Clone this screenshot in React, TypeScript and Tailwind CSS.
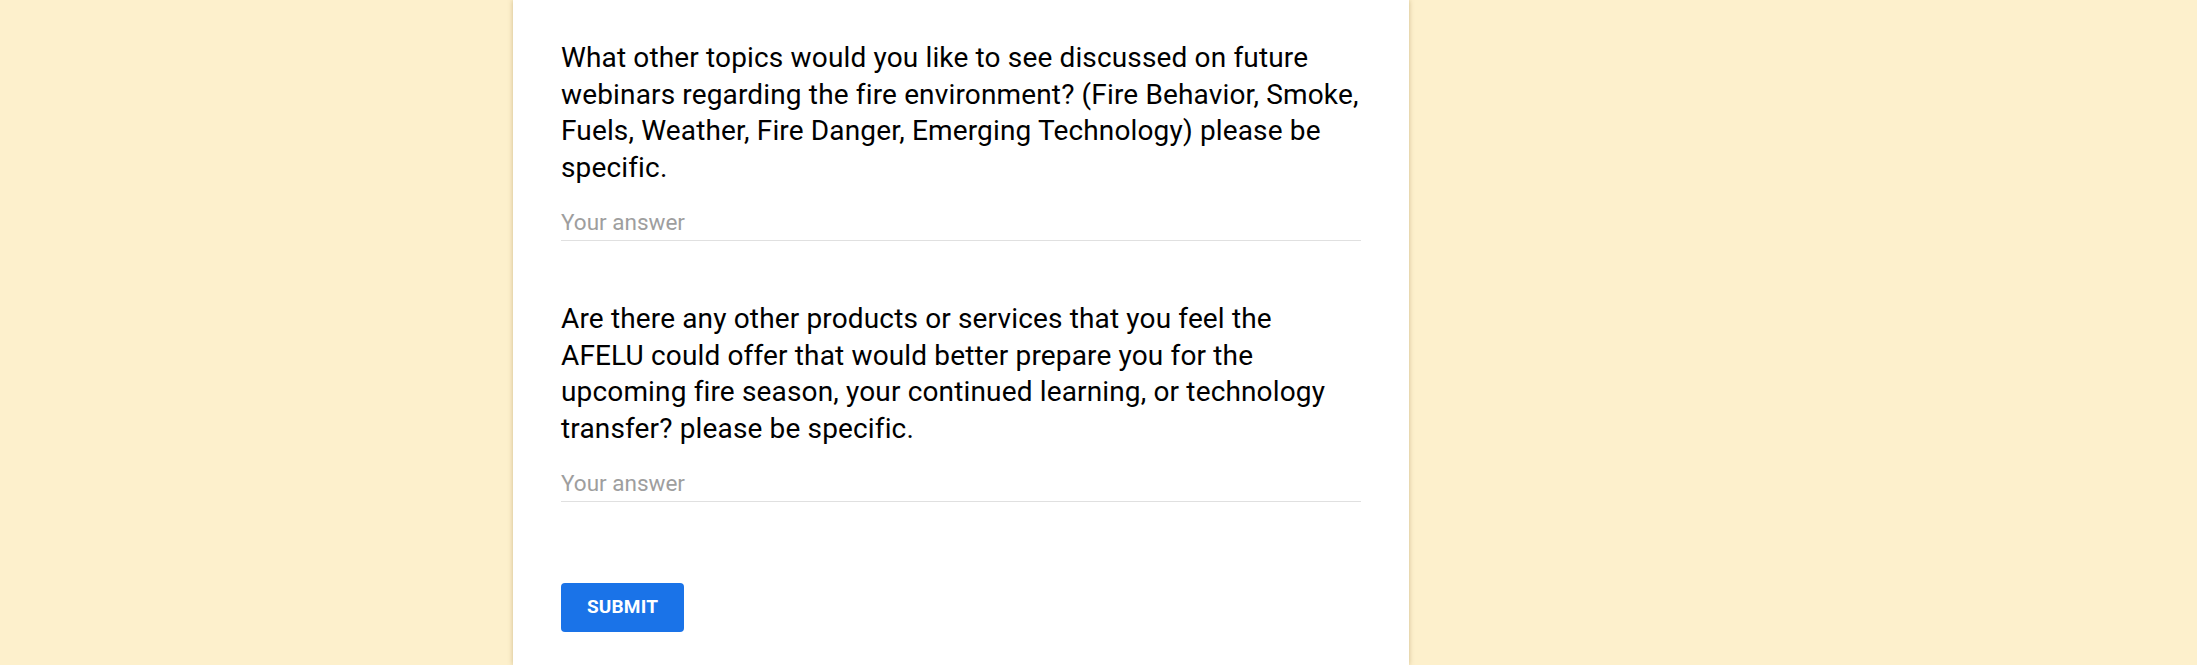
import React from "react";

export default function App() {
  return (
    <div
      className="h-[665px] w-full overflow-hidden bg-[#fdf0cc]"
      style={{ fontFamily: "Roboto, 'Noto Sans', Arial, sans-serif" }}
    >
      <div className="ml-[513px] w-[896px] h-[665px] bg-white shadow-[0_0_5px_rgba(120,90,20,0.35)] px-12 pt-10">
        <div className="text-[28px] leading-[36.7px] tracking-[0.15px] text-black">
          What other topics would you like to see discussed on future webinars regarding the fire environment? (Fire Behavior, Smoke, Fuels, Weather, Fire Danger, Emerging Technology) please be specific.
        </div>
        <div className="mt-[17px] border-b border-[#e0e0e0] text-[22.5px] leading-[36px] text-[#9e9e9e]">
          Your answer
        </div>
        <div className="mt-[60px] text-[28px] leading-[36.7px] tracking-[0.15px] text-black">
          Are there any other products or services that you feel the AFELU could offer that would better prepare you for the upcoming fire season, your continued learning, or technology transfer? please be specific.
        </div>
        <div className="mt-[17px] border-b border-[#e0e0e0] text-[22.5px] leading-[36px] text-[#9e9e9e]">
          Your answer
        </div>
        <button className="mt-[81px] h-[49px] w-[123px] rounded-[4px] bg-[#1a73e8] text-white text-[19px] font-bold tracking-[0.2px]">
          SUBMIT
        </button>
      </div>
    </div>
  );
}
